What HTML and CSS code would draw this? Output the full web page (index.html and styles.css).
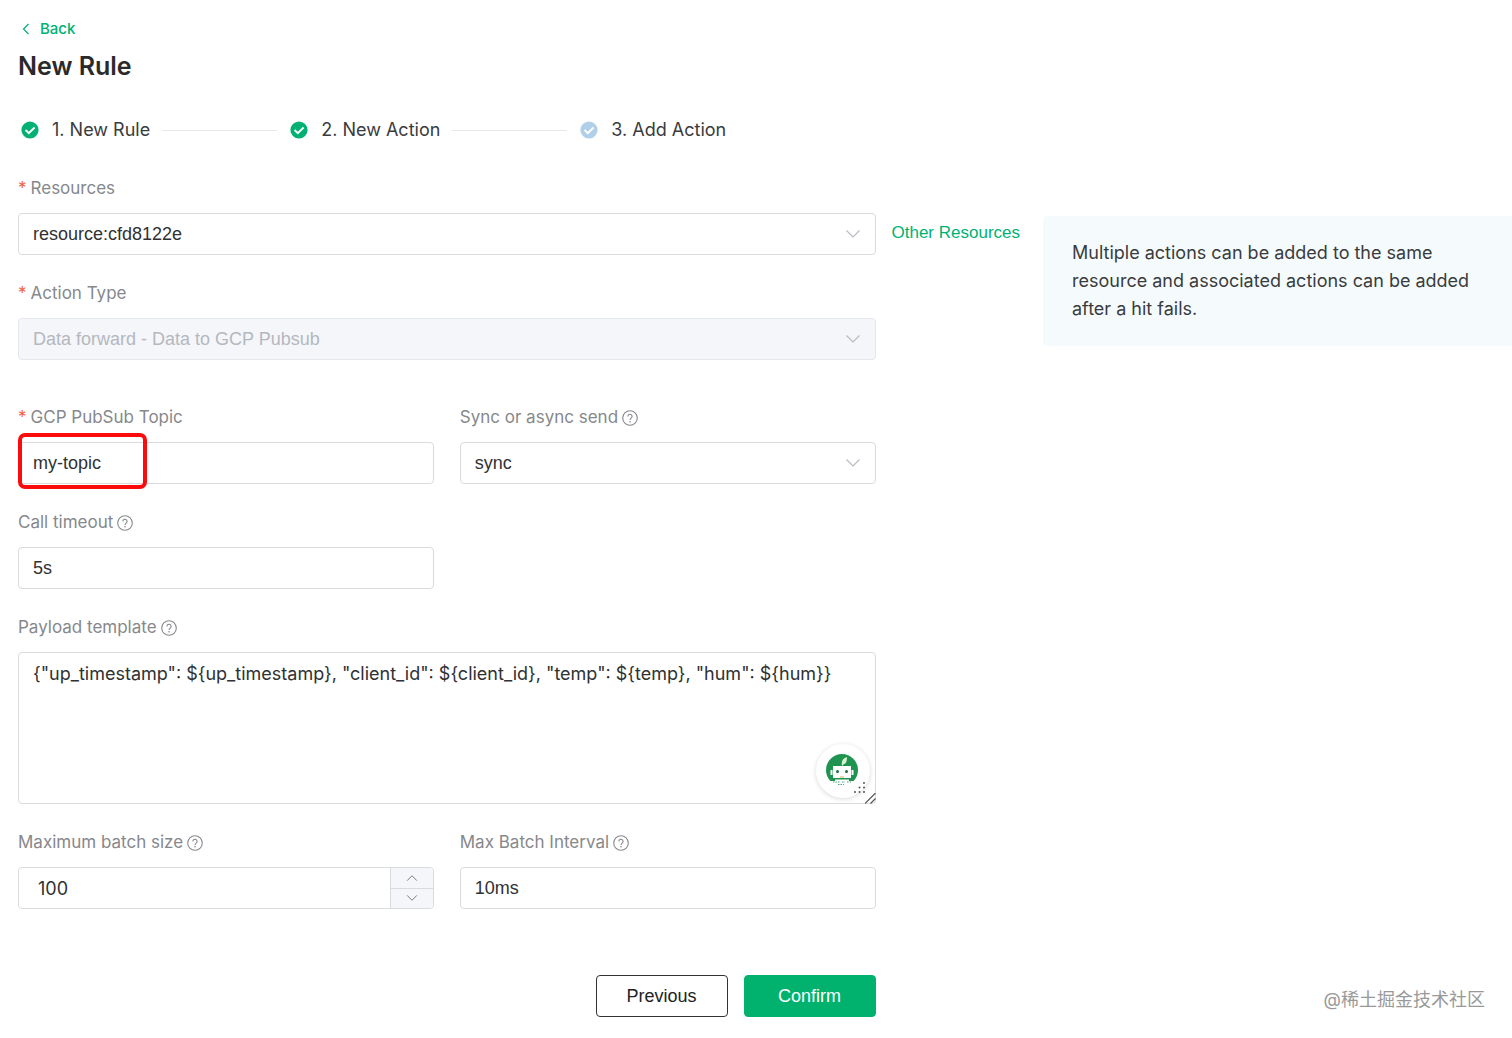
FILE: index.html
```html
<!DOCTYPE html>
<html lang="en">
<head>
  <meta charset="UTF-8">
  <meta name="viewport" content="width=device-width, initial-scale=1.0">
  <title>New Rule</title>
  <link rel="stylesheet" href="styles.css">
</head>
<body>
  <!-- shared icons -->
  <svg class="icon-defs" width="0" height="0">
    <symbol id="check" viewBox="0 0 18 18">
      <circle cx="9" cy="9" r="8.6" fill="currentColor"/>
      <path d="M4.6 9l3.200 3.100 5.800-5.600" fill="none" stroke="#fff" stroke-width="1.900"/>
    </symbol>
    <symbol id="down" viewBox="0 0 16 16">
      <path d="M1.5 4.5L8 11l6.500-6.500" fill="none" stroke="currentColor" stroke-width="1.200"/>
    </symbol>
    <symbol id="help" viewBox="0 0 16 16">
      <circle cx="8" cy="8" r="7.300" fill="none" stroke="currentColor" stroke-width="1.100"/>
      <path d="M5.900 6.400a2.100 2.100 0 1 1 3.300 1.700C8.300 8.700 8 9 8 9.900" fill="none" stroke="currentColor" stroke-width="1.100"/>
      <circle cx="8" cy="11.700" r=".8" fill="currentColor"/>
    </symbol>
  </svg>

  <header class="header">
    <a class="back" href="#">
      <svg width="8" height="12" viewBox="0 0 8 12"><path d="M6.500 1L1.500 6l5 5" fill="none" stroke="currentColor" stroke-width="1.200"/></svg>
      Back
    </a>
    <h1>New Rule</h1>
    <ol class="steps">
      <li class="step"><svg class="step-icon"><use href="#check"/></svg>1. New Rule</li>
      <li class="step"><svg class="step-icon"><use href="#check"/></svg>2. New Action</li>
      <li class="step step-current"><svg class="step-icon"><use href="#check"/></svg>3. Add Action</li>
    </ol>
  </header>

  <main class="content">
    <form class="rule-form">
      <div class="form-item">
        <label class="required" for="resource">Resources</label>
        <div class="select">
          <select id="resource"><option>resource:cfd8122e</option></select>
          <svg class="arrow"><use href="#down"/></svg>
        </div>
      </div>
      <div class="form-item form-item-last">
        <label class="required" for="type">Action Type</label>
        <div class="select">
          <select id="type" disabled><option>Data forward - Data to GCP Pubsub</option></select>
          <svg class="arrow"><use href="#down"/></svg>
        </div>
      </div>

      <div class="form-row">
        <div class="form-item">
          <label class="required" for="topic">GCP PubSub Topic</label>
          <div class="field">
            <input type="text" id="topic" value="my-topic">
            <span class="highlight"></span>
          </div>
        </div>
        <div class="form-item">
          <label for="sync">Sync or async send <svg class="help"><use href="#help"/></svg></label>
          <div class="select">
            <select id="sync"><option>sync</option><option>async</option></select>
            <svg class="arrow"><use href="#down"/></svg>
          </div>
        </div>
        <div class="form-item">
          <label for="timeout">Call timeout <svg class="help"><use href="#help"/></svg></label>
          <input type="text" id="timeout" value="5s">
        </div>
      </div>

      <div class="form-item">
        <label for="payload">Payload template <svg class="help"><use href="#help"/></svg></label>
        <div class="field">
          <textarea id="payload" spellcheck="false">{"up_timestamp": ${up_timestamp}, "client_id": ${client_id}, "temp": ${temp}, "hum": ${hum}}</textarea>
          <button type="button" class="robot" aria-label="Assistant">
            <svg width="54" height="54" viewBox="0 0 54 54">
              <circle cx="26" cy="26" r="16" fill="#1e9450"/>
              <path d="M14 37h25v7H14z" fill="#fff"/>
              <path d="M17 22h18v12H17zM14.500 26h2v5h-2zM35.500 26h2v5h-2zM19 35.500h14v2H19z" fill="#fff"/>
              <path d="M26 22c-1-5 1-8 5-9 0 4-1 7-3 7z" fill="#d9f2cf"/>
              <circle cx="21.500" cy="27.500" r="1.500" fill="#1e6b45"/>
              <circle cx="30.500" cy="27.500" r="1.500" fill="#1e6b45"/>
              <path d="M24 33h4" stroke="#d9b04d"/>
              <path d="M17 38h7M26 38h3M31 38h4M22 40.500h6" stroke="#4aa873" stroke-dasharray="1.500 1"/>
              <g fill="#555">
                <circle cx="48" cy="39" r="1"/><circle cx="43.500" cy="43.500" r="1"/><circle cx="48" cy="43.500" r="1"/>
                <circle cx="39" cy="48" r="1"/><circle cx="43.500" cy="48" r="1"/><circle cx="48" cy="48" r="1"/>
              </g>
            </svg>
          </button>
          <svg class="grip" width="11" height="11" viewBox="0 0 11 11"><path d="M0 10.500L10.500 0M5.500 10.500l5-5" stroke="#555" stroke-width="1.200"/></svg>
        </div>
      </div>

      <div class="form-row">
        <div class="form-item">
          <label for="batch">Maximum batch size <svg class="help"><use href="#help"/></svg></label>
          <div class="number">
            <input type="number" id="batch" value="100">
            <div class="number-buttons">
              <button type="button" aria-label="Increase"><svg class="up"><use href="#down"/></svg></button>
              <button type="button" aria-label="Decrease"><svg><use href="#down"/></svg></button>
            </div>
          </div>
        </div>
        <div class="form-item">
          <label for="interval">Max Batch Interval <svg class="help"><use href="#help"/></svg></label>
          <input type="text" id="interval" value="10ms">
        </div>
      </div>

      <div class="buttons">
        <button type="button" class="btn">Previous</button>
        <button type="submit" class="btn btn-primary">Confirm</button>
      </div>
    </form>

    <a class="other" href="#">Other Resources</a>
    <aside class="tip">Multiple actions can be added to the same resource and associated actions can be added after a hit fails.</aside>
  </main>

  <div class="watermark">@稀土掘金技术社区</div>
</body>
</html>
```

FILE: styles.css
```css
* {
  box-sizing: border-box;
}
body {
  margin: 0;
  padding: 18px 0 20px 18px;
  font-family: Inter, "Noto Sans CJK SC", sans-serif;
  font-size: 18px;
  color: #3a3b3d;
  background: #fff;
}
a {
  color: #00b173;
  text-decoration: none;
}
.icon-defs {
  position: absolute;
}

/* header */
.back {
  display: inline-flex;
  align-items: center;
  gap: 10px;
  padding-left: 4px;
  font-size: 15px;
  font-weight: 500;
  line-height: 22px;
}
h1 {
  margin: 8px 0 32px;
  font-size: 25px;
  font-weight: 600;
  line-height: 36px;
  color: #2a2a2a;
}
.steps {
  display: flex;
  margin: 0 0 32px;
  padding: 0 0 0 3px;
  list-style: none;
  line-height: 28px;
}
.step {
  display: flex;
  align-items: center;
}
.step:not(:last-child)::after {
  content: "";
  width: 115px;
  height: 1px;
  margin: 0 13px 0 12px;
  background: #e6e8eb;
}
.step-icon {
  width: 18px;
  height: 18px;
  margin-right: 13px;
  color: #00b173;
}
.step-current .step-icon {
  color: #b0cfe8;
}

/* form */
.content {
  display: flex;
  align-items: flex-start;
}
.rule-form {
  flex: 1;
  min-width: 0;
}
.form-row {
  display: grid;
  grid-template-columns: 1fr 1fr;
  column-gap: 26px;
}
.form-item {
  margin-bottom: 26px;
}
.form-item-last {
  margin-bottom: 45px;
}
label {
  display: flex;
  align-items: center;
  gap: 4px;
  margin-bottom: 12px;
  font-size: 17px;
  line-height: 25px;
  color: #86888c;
}
.required::before {
  content: "*";
  color: #f0623c;
}
.help {
  width: 16px;
  height: 16px;
}
.field, .select, .number {
  position: relative;
}
input, select, textarea {
  display: block;
  width: 100%;
  height: 42px;
  padding: 0 14px;
  border: 1px solid #d9dbdf;
  border-radius: 4px;
  outline: none;
  font-family: "Liberation Sans", Arial, sans-serif;
  font-size: 18px;
  color: #303133;
  background: #fff;
  appearance: none;
}
select:disabled {
  border-color: #e4e7ec;
  color: #b4b8bf;
  background: #f4f6f9;
  opacity: 1;
}
.arrow {
  position: absolute;
  top: 13px;
  right: 15px;
  width: 16px;
  height: 16px;
  color: #b8bbc2;
  pointer-events: none;
}
.highlight {
  position: absolute;
  top: -9px;
  left: 0;
  width: 129px;
  height: 56px;
  border: 4px solid #fb0b0b;
  border-radius: 7px;
  pointer-events: none;
}
textarea {
  height: 152px;
  padding: 7px 14px;
  font-family: Inter, sans-serif;
  line-height: 27px;
  resize: none;
}
.robot {
  position: absolute;
  right: 6px;
  bottom: 6px;
  width: 54px;
  height: 54px;
  padding: 0;
  border: none;
  border-radius: 50%;
  background: #fff;
  box-shadow: 0 1px 5px rgba(0, 0, 0, 0.15);
}
.grip {
  position: absolute;
  right: 0;
  bottom: 0;
}
.number {
  display: flex;
  border: 1px solid #d9dbdf;
  border-radius: 4px;
  overflow: hidden;
}
.number input {
  flex: 1;
  height: 40px;
  padding: 0 19px;
  border: none;
  font-family: Inter, sans-serif;
  appearance: textfield;
}
.number input::-webkit-inner-spin-button {
  appearance: none;
}
.number-buttons {
  display: flex;
  flex-direction: column;
  width: 43px;
  border-left: 1px solid #d9dbdf;
}
.number-buttons button {
  display: flex;
  flex: 1;
  align-items: center;
  justify-content: center;
  padding: 0;
  border: none;
  color: #6b6e73;
  background: #f4f6f9;
}
.number-buttons button + button {
  border-top: 1px solid #d9dbdf;
}
.number-buttons svg {
  width: 12px;
  height: 12px;
}
.up {
  transform: rotate(180deg);
}
.buttons {
  display: flex;
  justify-content: flex-end;
  gap: 16px;
  margin-top: 40px;
}
.btn {
  width: 132px;
  height: 42px;
  border: 1px solid #333;
  border-radius: 4px;
  font-family: "Liberation Sans", Arial, sans-serif;
  font-size: 18px;
  color: #222;
  background: #fff;
  cursor: pointer;
}
.btn-primary {
  border-color: #00b26d;
  color: #fff;
  background: #00b26d;
}

/* right side */
.other {
  margin: 44px 23px 0 16px;
  font-family: "Liberation Sans", Arial, sans-serif;
  font-size: 17px;
  line-height: 25px;
}
.tip {
  width: 469px;
  margin-top: 40px;
  padding: 23px 29px;
  border-radius: 4px 0 0 4px;
  line-height: 28px;
  background: #f5fbfd;
}
.watermark {
  position: absolute;
  right: 27px;
  bottom: 26px;
  font-size: 18px;
  line-height: 24px;
  color: #999;
}
```
